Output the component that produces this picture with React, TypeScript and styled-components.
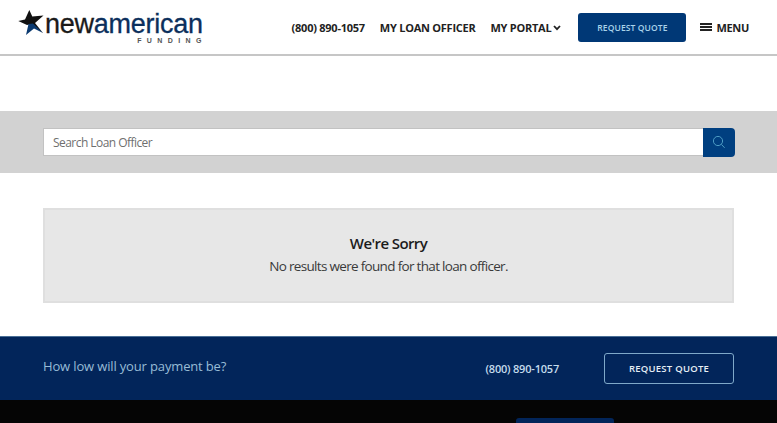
import styled, { createGlobalStyle } from 'styled-components';

const GlobalStyle = createGlobalStyle`
    html, body {
        margin: 0;
        padding: 0;
        background: #fff;
        overflow: hidden;
    }
    body {
        font-family: 'Open Sans', 'Liberation Sans', sans-serif;
    }
`;

const Logo = () => (
    <LogoWrap>
        <svg width="26" height="25" viewBox="0 0 26 25">
            <path d="M0.3 11 L7 9.5 L11.3 0 L14.3 6.5 L25.5 5.5 L17 13 L25 23 L14 14 L9 15 Z" fill="#111" />
            <path d="M8 25 L10.5 14 L15 13.5 L25 23 L16 18.5 Z" fill="#0b3a70" />
        </svg>
        <LogoText>
            <LogoName>
                new<LogoAccent>american</LogoAccent>
            </LogoName>
            <LogoSub>FUNDING</LogoSub>
        </LogoText>
    </LogoWrap>
);

const App = () => {
    return (
        <>
            <GlobalStyle />
            <Header>
                <Logo />
                <Nav>
                    <NavLink>(800) 890-1057</NavLink>
                    <NavLink>MY LOAN OFFICER</NavLink>
                    <NavLink>
                        MY PORTAL
                        <Chevron width="8" height="6" viewBox="0 0 8 6">
                            <path d="M1 1 L4 4.2 L7 1" fill="none" stroke="#222" strokeWidth="1.8" />
                        </Chevron>
                    </NavLink>
                    <QuoteButton>REQUEST QUOTE</QuoteButton>
                    <MenuLink>
                        <Burger>
                            <span />
                            <span />
                            <span />
                        </Burger>
                        MENU
                    </MenuLink>
                </Nav>
            </Header>

            <SearchBand>
                <SearchInput placeholder="Search Loan Officer" readOnly />
                <SearchButton>
                    <svg width="14" height="14" viewBox="0 0 14 14">
                        <circle cx="6" cy="6" r="4.6" fill="none" stroke="#4d9cc4" strokeWidth="1" />
                        <path d="M9.4 9.4 L12.6 12.8" stroke="#4d9cc4" strokeWidth="1" />
                    </svg>
                </SearchButton>
            </SearchBand>

            <Results>
                <Sorry>
                    <SorryTitle>We're Sorry</SorryTitle>
                    <SorryText>No results were found for that loan officer.</SorryText>
                </Sorry>
            </Results>

            <Cta>
                <CtaLead>How low will your payment be?</CtaLead>
                <CtaRight>
                    <CtaPhone>(800) 890-1057</CtaPhone>
                    <CtaButton>REQUEST QUOTE</CtaButton>
                </CtaRight>
            </Cta>

            <Footer>
                <FooterButton />
            </Footer>
        </>
    );
};

const Header = styled.header`
    height: 56px;
    box-sizing: border-box;
    display: flex;
    align-items: center;
    justify-content: space-between;
    padding: 0 28px 0 18px;
    background: #fff;
    border-bottom: 2px solid #c6c6c6;
`;

const LogoWrap = styled.div`
    display: flex;
    align-items: flex-start;
    height: 31px;
    margin-top: -3px;
`;

const LogoText = styled.div`
    display: flex;
    flex-direction: column;
    align-items: flex-end;
    margin: 1px 0 0 1px;
`;

const LogoName = styled.div`
    font-family: 'Liberation Sans', Arial, sans-serif;
    font-size: 27px;
    line-height: 26px;
    letter-spacing: -0.25px;
    color: #1a1a1a;
    -webkit-text-stroke: 0.3px currentColor;
`;

const LogoAccent = styled.span`
    color: #0b2f5c;
`;

const LogoSub = styled.div`
    margin-right: -4px;
    font-family: 'Liberation Sans', Arial, sans-serif;
    font-size: 7px;
    line-height: 7px;
    font-weight: 700;
    letter-spacing: 5.4px;
    color: #555;
`;

const Nav = styled.nav`
    display: flex;
    align-items: center;
`;

const NavLink = styled.a`
    display: flex;
    align-items: center;
    gap: 2px;
    margin-right: 15px;
    font-size: 11px;
    font-weight: 700;
    letter-spacing: -0.25px;
    color: #222;
    white-space: nowrap;
`;

const Chevron = styled.svg`
    margin-top: 1px;
`;

const QuoteButton = styled.button`
    width: 108px;
    height: 29px;
    margin: 0 14px 0 2px;
    padding: 0;
    border: none;
    border-radius: 3px;
    background: #003876;
    color: #a9d3ea;
    font-family: inherit;
    font-size: 8.5px;
    font-weight: 600;
    letter-spacing: 0.1px;
`;

const MenuLink = styled.a`
    display: flex;
    align-items: center;
    gap: 4px;
    font-size: 11px;
    font-weight: 700;
    letter-spacing: -0.3px;
    color: #222;
`;

const Burger = styled.span`
    display: flex;
    flex-direction: column;
    gap: 1.5px;
    width: 12px;
    span {
        display: block;
        height: 1.5px;
        background: #222;
    }
`;

const SearchBand = styled.section`
    margin-top: 55px;
    height: 62px;
    box-sizing: border-box;
    display: flex;
    align-items: center;
    padding: 0 42px 0 43px;
    background: #d2d2d2;
`;

const SearchInput = styled.input`
    flex: 1;
    min-width: 0;
    height: 28px;
    box-sizing: border-box;
    padding: 0 9px;
    border: 1px solid #c2c2c2;
    border-right: none;
    border-radius: 0;
    outline: none;
    background: #fff;
    font-family: inherit;
    font-size: 12px;
    letter-spacing: -0.55px;
    &::placeholder {
        color: #6f6f6f;
        opacity: 1;
    }
`;

const SearchButton = styled.button`
    width: 32px;
    height: 29px;
    display: flex;
    align-items: center;
    justify-content: center;
    padding: 0;
    border: none;
    border-radius: 0 4px 4px 0;
    background: #003f80;
`;

const Results = styled.section`
    padding: 35px 43px 33px;
`;

const Sorry = styled.div`
    height: 95px;
    box-sizing: border-box;
    padding-top: 22px;
    border: 2px solid #dfdfdf;
    background: #e7e7e7;
    text-align: center;
`;

const SorryTitle = styled.h2`
    margin: 0;
    font-size: 15px;
    line-height: 22px;
    font-weight: 600;
    letter-spacing: -0.6px;
    color: #1c1c1c;
`;

const SorryText = styled.p`
    margin: 2px 0 0;
    font-size: 13.5px;
    line-height: 20px;
    letter-spacing: -0.68px;
    color: #3a3a3a;
`;

const Cta = styled.section`
    height: 64px;
    box-sizing: border-box;
    display: flex;
    align-items: center;
    justify-content: space-between;
    padding: 0 43px;
    background: #02255a;
    border-top: 1px solid #4a6f96;
`;

const CtaLead = styled.div`
    margin-top: -5px;
    font-size: 13px;
    letter-spacing: -0.15px;
    color: #97bcd6;
`;

const CtaRight = styled.div`
    display: flex;
    align-items: center;
    gap: 45px;
`;

const CtaPhone = styled.a`
    font-size: 11px;
    font-weight: 600;
    letter-spacing: -0.2px;
    color: #c5dcec;
`;

const CtaButton = styled.button`
    width: 130px;
    height: 31px;
    padding: 0;
    border: 1.5px solid #7fa9c9;
    border-radius: 3px;
    background: transparent;
    color: #e6eef5;
    font-family: inherit;
    font-size: 9.5px;
    font-weight: 600;
    letter-spacing: 0.25px;
`;

const Footer = styled.footer`
    height: 23px;
    overflow: hidden;
    padding: 18px 0 0 516px;
    box-sizing: border-box;
    background: #050505;
`;

const FooterButton = styled.div`
    width: 98px;
    height: 20px;
    border-radius: 3px;
    background: #02255a;
`;

export default App;
